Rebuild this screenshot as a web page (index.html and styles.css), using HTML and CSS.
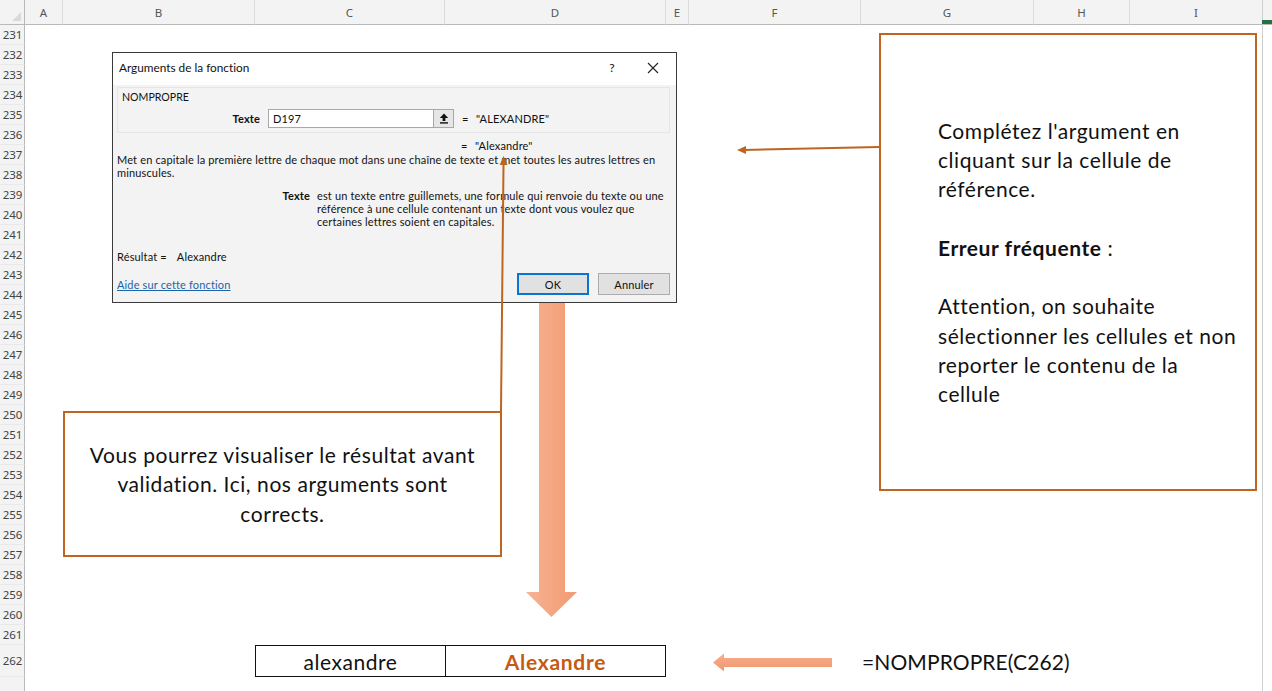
FILE: index.html
```html
<!DOCTYPE html>
<html lang="fr">
<head>
<meta charset="utf-8">
<title>NOMPROPRE</title>
<link rel="stylesheet" href="styles.css">
</head>
<body>
<div class="page">
  <div class="sheet">
    <div class="ch corner"><span class="corner-tri"></span></div>
    <div class="ch">A</div>
    <div class="ch">B</div>
    <div class="ch">C</div>
    <div class="ch">D</div>
    <div class="ch">E</div>
    <div class="ch">F</div>
    <div class="ch">G</div>
    <div class="ch">H</div>
    <div class="ch">I</div>
    <div class="ch filler"></div>

    <div class="rh">231</div><div class="rb"></div>
    <div class="rh">232</div><div class="rb"></div>
    <div class="rh">233</div><div class="rb"></div>
    <div class="rh">234</div><div class="rb"></div>
    <div class="rh">235</div><div class="rb"></div>
    <div class="rh">236</div><div class="rb"></div>
    <div class="rh">237</div><div class="rb"></div>
    <div class="rh">238</div><div class="rb"></div>
    <div class="rh">239</div><div class="rb"></div>
    <div class="rh">240</div><div class="rb"></div>
    <div class="rh">241</div><div class="rb"></div>
    <div class="rh">242</div><div class="rb"></div>
    <div class="rh">243</div><div class="rb"></div>
    <div class="rh">244</div><div class="rb"></div>
    <div class="rh">245</div><div class="rb"></div>
    <div class="rh">246</div><div class="rb"></div>
    <div class="rh">247</div><div class="rb"></div>
    <div class="rh">248</div><div class="rb"></div>
    <div class="rh">249</div><div class="rb"></div>
    <div class="rh">250</div><div class="rb"></div>
    <div class="rh">251</div><div class="rb"></div>
    <div class="rh">252</div><div class="rb"></div>
    <div class="rh">253</div><div class="rb"></div>
    <div class="rh">254</div><div class="rb"></div>
    <div class="rh">255</div><div class="rb"></div>
    <div class="rh">256</div><div class="rb"></div>
    <div class="rh">257</div><div class="rb"></div>
    <div class="rh">258</div><div class="rb"></div>
    <div class="rh">259</div><div class="rb"></div>
    <div class="rh">260</div><div class="rb"></div>
    <div class="rh">261</div><div class="rb"></div>

    <div class="rh">262</div>
    <div class="blank-ab"></div>
    <div class="cell cell-c">alexandre</div>
    <div class="cell cell-d">Alexandre</div>
    <div class="blank-ef"></div>
    <div class="formula">=NOMPROPRE(C262)</div>

    <div class="rh last"></div><div class="rb"></div>
  </div>

  <div class="edge"><span class="edge-mark"></span></div>

  <div class="dialog">
    <div class="dlg-title">
      <span class="dlg-title-text">Arguments de la fonction</span>
      <span class="dlg-help">?</span>
      <span class="dlg-close">
        <svg width="12" height="12" viewBox="0 0 12 12"><path d="M1 1 L11 11 M11 1 L1 11" stroke="#222" stroke-width="1.1" fill="none"/></svg>
      </span>
    </div>
    <div class="dlg-body">
      <div class="group">
        <div class="fn-name">NOMPROPRE</div>
        <div class="arg-row">
          <span class="arg-label">Texte</span>
          <span class="arg-input">D197</span>
          <span class="arg-btn">
            <svg width="10" height="11" viewBox="0 0 10 11"><path d="M5 0.5 L9.2 5 L6.4 5 L6.4 8 L3.6 8 L3.6 5 L0.8 5 Z" fill="#111"/><rect x="1" y="9.2" width="8" height="1.4" fill="#111"/></svg>
          </span>
          <span class="eq">=</span>
          <span class="arg-val">"ALEXANDRE"</span>
        </div>
      </div>
      <div class="res-row"><span class="eq">=</span><span class="arg-val">"Alexandre"</span></div>
      <div class="desc">Met en capitale la première lettre de chaque mot dans une chaîne de texte et met toutes les autres lettres en<br>minuscules.</div>
      <div class="detail">
        <span class="detail-label">Texte</span>
        <span class="detail-text">est un texte entre guillemets, une formule qui renvoie du texte ou une<br>référence à une cellule contenant un texte dont vous voulez que<br>certaines lettres soient en capitales.</span>
      </div>
      <div class="result"><span>Résultat =</span><span class="result-val">Alexandre</span></div>
      <div class="dlg-foot">
        <a class="help-link">Aide sur cette fonction</a>
        <span class="btn btn-ok">OK</span>
        <span class="btn">Annuler</span>
      </div>
    </div>
  </div>

  <div class="callout callout-right">
    <div class="callout-text">Complétez l'argument en<br>cliquant sur la cellule de<br>référence.<br><br><b>Erreur fréquente</b> :<br><br>Attention, on souhaite<br>sélectionner les cellules et non<br>reporter le contenu de la<br>cellule</div>
  </div>

  <div class="callout callout-left">
    <div class="callout-text centered">Vous pourrez visualiser le résultat avant<br>validation. Ici, nos arguments sont<br>corrects.</div>
  </div>

  <svg class="shapes" width="1272" height="691" viewBox="0 0 1272 691">
    <defs>
      <linearGradient id="salmonV" x1="0" y1="0" x2="1" y2="0">
        <stop offset="0" stop-color="#f7b391"/>
        <stop offset="1" stop-color="#f29a73"/>
      </linearGradient>
      <linearGradient id="salmonH" x1="0" y1="0" x2="0" y2="1">
        <stop offset="0" stop-color="#f6ad8a"/>
        <stop offset="1" stop-color="#f1976f"/>
      </linearGradient>
    </defs>
    <line x1="879" y1="147" x2="744" y2="150" stroke="#c0651f" stroke-width="2"/>
    <path d="M737 150 L746 146 L746 154 Z" fill="#c0651f"/>
    <line x1="501" y1="411" x2="503.5" y2="164" stroke="#c0651f" stroke-width="2"/>
    <path d="M503.6 156 L507.6 165 L499.6 165 Z" fill="#c0651f"/>
    <path d="M539 303 L565 303 L565 592 L577 592 L551.5 617 L526 592 L539 592 Z" fill="url(#salmonV)"/>
    <path d="M713 662.5 L724 653.5 L724 658 L832 658 L832 667 L724 667 L724 671.5 Z" fill="url(#salmonH)"/>
  </svg>
</div>
</body>
</html>
```

FILE: styles.css
```css
* { box-sizing: border-box; }
html, body { margin: 0; padding: 0; background: #ffffff; }
.page {
  position: relative;
  width: 1272px;
  height: 691px;
  overflow: hidden;
  background: #ffffff;
  font-family: "Lato", "Liberation Sans", sans-serif;
  font-variant-ligatures: none;
}
.sheet {
  display: grid;
  grid-template-columns: 25px 38px 192px 190px 221px 23px 172px 173px 96px 133px 1fr;
  grid-template-rows: 25px repeat(31, 20px) 32px 1fr;
  width: 1272px;
  height: 691px;
}
.ch {
  background: #f3f3f3;
  border-bottom: 1px solid #b9b9b9;
  border-right: 1px solid #dcdcdc;
  color: #555;
  font-family: "Noto Sans", "Liberation Sans", sans-serif;
  font-size: 11.5px;
  display: flex;
  align-items: center;
  justify-content: center;
}
.corner { position: relative; border-right: 1px solid #b9b9b9; }
.corner-tri {
  position: absolute;
  right: 3px;
  bottom: 3px;
  width: 0; height: 0;
  border-left: 9px solid transparent;
  border-bottom: 9px solid #dadada;
}
.filler { border-right: none; }
.rh {
  grid-column: 1;
  background: #f3f3f3;
  border-right: 1px solid #b9b9b9;
  border-bottom: 1px solid #e9e9e9;
  color: #444;
  font-family: "Noto Sans", "Liberation Sans", sans-serif;
  font-size: 11.5px;
  display: flex;
  align-items: center;
  justify-content: center;
  padding-left: 1px;
}
.rh.last { border-bottom: none; }
.rb { grid-column: 2 / -1; }
.blank-ab { grid-column: 2 / span 2; }
.blank-ef { grid-column: 6 / span 2; }
.cell {
  border: 1px solid #111;
  display: flex;
  align-items: center;
  justify-content: center;
  font-size: 21px;
  letter-spacing: 0.55px;
  color: #111;
}
.cell-c { border-right: none; }
.cell-d { font-weight: bold; color: #c55a11; letter-spacing: 0.7px; }
.formula {
  grid-column: 8 / -1;
  display: flex;
  align-items: center;
  padding-left: 1px;
  font-size: 21px;
  letter-spacing: 0.1px;
  color: #111;
}

.edge {
  position: absolute;
  left: 1262px;
  top: 0;
  width: 1px;
  height: 691px;
  background: #cfcfcf;
}
.edge-mark {
  position: absolute;
  left: 0;
  top: 20px;
  width: 10px;
  height: 4px;
  background: #217346;
}

/* dialog */
.dialog {
  position: absolute;
  left: 112px;
  top: 52px;
  width: 565px;
  height: 251px;
  border: 1px solid #3a3a3a;
  background: #f3f3f3;
  display: flex;
  flex-direction: column;
  font-family: "Lato", "Liberation Sans", sans-serif;
  font-size: 11px;
  letter-spacing: 0.15px;
  color: #111;
}
.dlg-title {
  height: 32px;
  background: #ffffff;
  display: flex;
  align-items: center;
  padding-left: 6px;
  padding-bottom: 3px;
  font-size: 11.8px;
  letter-spacing: 0;
}
.dlg-help { margin-left: auto; width: 36px; text-align: center; font-size: 12px; }
.dlg-close { width: 46px; display: flex; justify-content: center; align-items: center; }
.dlg-body {
  flex: 1;
  display: flex;
  flex-direction: column;
  padding: 2px 6px 0 4px;
}
.group {
  border: 1px solid #e6e6e6;
  padding: 1px 0 4px 4px;
}
.fn-name { height: 17px; line-height: 17px; letter-spacing: 0; font-size: 10.6px; }
.arg-row { display: flex; align-items: center; height: 19px; margin-top: 3px; }
.arg-label { width: 138px; text-align: right; font-weight: bold; }
.arg-input {
  margin-left: 8px;
  width: 166px;
  height: 19px;
  background: #fff;
  border: 1px solid #a8a8a8;
  padding-left: 4px;
  display: flex;
  align-items: center;
}
.arg-btn {
  width: 20px;
  height: 19px;
  background: #e6e6e6;
  border: 1px solid #a8a8a8;
  border-left: none;
  display: flex;
  align-items: center;
  justify-content: center;
}
.eq { width: 14px; margin-left: 8px; }
.res-row { display: flex; height: 14px; align-items: center; margin-top: 5px; padding-left: 336px; }
.desc { margin-top: 1px; line-height: 13px; white-space: nowrap; }
.detail { display: flex; margin-top: 10px; line-height: 13px; white-space: nowrap; }
.detail-label { width: 193px; text-align: right; font-weight: bold; }
.detail-text { margin-left: 7px; }
.result { display: flex; margin-top: 22px; height: 13px; align-items: center; }
.result-val { margin-left: 10px; }
.dlg-foot { display: flex; align-items: center; margin-top: 10px; height: 22px; }
.help-link { color: #1c63a8; text-decoration: underline; }
.btn {
  width: 72px;
  height: 22px;
  background: #e1e1e1;
  border: 1px solid #adadad;
  display: flex;
  align-items: center;
  justify-content: center;
}
.btn-ok { margin-left: auto; margin-right: 9px; border: 2px solid #0a74d0; }

/* callouts */
.callout {
  position: absolute;
  border: 2px solid #c0651f;
  background: #ffffff;
  display: flex;
  align-items: center;
  font-family: "Lato", "Liberation Sans", sans-serif;
  font-size: 21px;
  letter-spacing: 0.55px;
  line-height: 29.3px;
  color: #111;
}
.callout-right { left: 879px; top: 33px; width: 378px; height: 458px; padding-left: 57px; }
.callout-left { left: 63px; top: 411px; width: 439px; height: 146px; justify-content: center; }
.centered { text-align: center; }

.shapes { position: absolute; left: 0; top: 0; pointer-events: none; }
```
